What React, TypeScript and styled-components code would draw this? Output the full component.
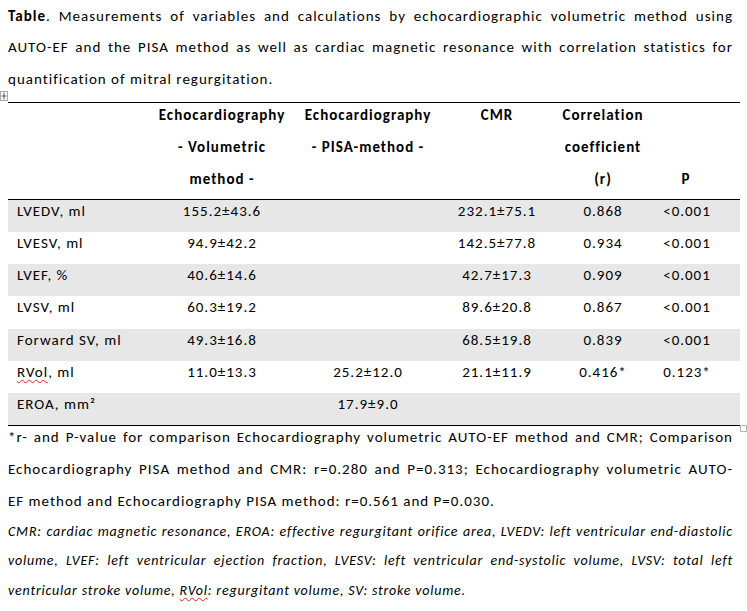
import React from "react";
import styled, { createGlobalStyle } from "styled-components";

const GlobalStyle = createGlobalStyle`
  html, body { margin: 0; padding: 0; background: #ffffff; }
  body {
    font-family: Carlito, Calibri, Lato, "Noto Sans", sans-serif;
    color: #000000;
  }
`;

const COLS = "142px 144px 148px 110px 102px 86px";

const Page = styled.div`
  position: relative;
  width: 747px;
  height: 611px;
  box-sizing: border-box;
  padding: 8px 7px 0 8px;
  overflow: hidden;
  font-size: 15px;
  letter-spacing: 1px;
`;

const TextBlock = styled.div`
  width: 725px;
`;

const Line = styled.div<{ $h: number; $last?: boolean; $italic?: boolean }>`
  height: ${(p) => p.$h}px;
  line-height: 17px;
  text-align: justify;
  text-align-last: ${(p) => (p.$last ? "left" : "justify")};
  white-space: nowrap;
  font-style: ${(p) => (p.$italic ? "italic" : "normal")};
  font-size: ${(p) => (p.$italic ? "14px" : "15px")};
  letter-spacing: ${(p) => (p.$italic ? "0.8px" : "1px")};
`;

const Bold = styled.b`
  font-weight: 700;
`;

const Misspelled = styled.span`
  text-decoration: underline wavy #e02020;
  text-decoration-thickness: 1px;
  text-underline-offset: 2px;
  text-decoration-skip-ink: none;
`;

const Table = styled.div`
  position: relative;
  width: 732px;
  border-top: 1px solid #000;
  border-bottom: 1px solid #000;
`;

const HeadRow = styled.div`
  display: grid;
  grid-template-columns: ${COLS};
  height: 96px;
  border-bottom: 1px solid #000;
  font-weight: 700;
`;

const HeadCell = styled.div<{ $skip?: number; $padRight?: number }>`
  display: flex;
  flex-direction: column;
  align-items: center;
  padding-top: ${(p) => 4 + (p.$skip ?? 0) * 32}px;
  padding-right: ${(p) => p.$padRight ?? 0}px;
`;

const HeadLine = styled.div`
  height: 32px;
  line-height: 17px;
  white-space: nowrap;
`;

const DataRow = styled.div<{ $shaded: boolean }>`
  display: grid;
  grid-template-columns: ${COLS};
  box-sizing: border-box;
  height: calc(225px / 7);
  padding-top: 3px;
  line-height: 17px;
  background: ${(p) => (p.$shaded ? "#e7e7e7" : "transparent")};
`;

const LabelCell = styled.div`
  padding-left: 9px;
  white-space: nowrap;
`;

const ValueCell = styled.div<{ $padRight?: number }>`
  text-align: center;
  white-space: nowrap;
  padding-right: ${(p) => p.$padRight ?? 0}px;
`;

const Footnote = styled(TextBlock)`
  margin-top: 3px;
`;

const MoveHandle = styled.div`
  position: absolute;
  left: 0;
  top: 91px;
  width: 8px;
  height: 10px;
  border: 1px solid #a8a8a8;
  box-sizing: border-box;
  background: #fff;
  display: flex;
  align-items: center;
  justify-content: center;
`;

const ResizeHandle = styled.div`
  position: absolute;
  left: 740px;
  top: 425px;
  width: 7px;
  height: 7px;
  border: 1px solid #b4b4b4;
  box-sizing: border-box;
  background: #fff;
`;

type Row = {
  label: React.ReactNode;
  vol?: string;
  pisa?: string;
  cmr?: string;
  r?: string;
  p?: string;
};

const rows: Row[] = [
  { label: "LVEDV, ml", vol: "155.2±43.6", cmr: "232.1±75.1", r: "0.868", p: "<0.001" },
  { label: "LVESV, ml", vol: "94.9±42.2", cmr: "142.5±77.8", r: "0.934", p: "<0.001" },
  { label: "LVEF, %", vol: "40.6±14.6", cmr: "42.7±17.3", r: "0.909", p: "<0.001" },
  { label: "LVSV, ml", vol: "60.3±19.2", cmr: "89.6±20.8", r: "0.867", p: "<0.001" },
  { label: "Forward SV, ml", vol: "49.3±16.8", cmr: "68.5±19.8", r: "0.839", p: "<0.001" },
  {
    label: (
      <>
        <Misspelled>RVol</Misspelled>, ml
      </>
    ),
    vol: "11.0±13.3",
    pisa: "25.2±12.0",
    cmr: "21.1±11.9",
    r: "0.416*",
    p: "0.123*",
  },
  { label: "EROA, mm²", pisa: "17.9±9.0" },
];

export default function App() {
  return (
    <Page>
      <GlobalStyle />
      <TextBlock>
        <Line $h={31.33}>
          <Bold>Table</Bold>. Measurements of variables and calculations by echocardiographic volumetric method using
        </Line>
        <Line $h={31.33}>
          AUTO-EF and the PISA method as well as cardiac magnetic resonance with correlation statistics for
        </Line>
        <Line $h={31.33} $last>
          quantification of mitral regurgitation.
        </Line>
      </TextBlock>

      <MoveHandle>
        <svg width="6" height="8" viewBox="0 0 6 8">
          <path d="M3 0.5 V7.5 M0.5 4 H5.5" stroke="#555" strokeWidth="1" fill="none" />
        </svg>
      </MoveHandle>

      <Table>
        <HeadRow>
          <HeadCell />
          <HeadCell>
            <HeadLine>Echocardiography</HeadLine>
            <HeadLine>- Volumetric</HeadLine>
            <HeadLine>method -</HeadLine>
          </HeadCell>
          <HeadCell>
            <HeadLine>Echocardiography</HeadLine>
            <HeadLine>- PISA-method -</HeadLine>
          </HeadCell>
          <HeadCell>
            <HeadLine>CMR</HeadLine>
          </HeadCell>
          <HeadCell>
            <HeadLine>Correlation</HeadLine>
            <HeadLine>coefficient</HeadLine>
            <HeadLine>(r)</HeadLine>
          </HeadCell>
          <HeadCell $skip={2} $padRight={22}>
            <HeadLine>P</HeadLine>
          </HeadCell>
        </HeadRow>
        {rows.map((r, i) => (
          <DataRow key={i} $shaded={i % 2 === 0}>
            <LabelCell>{r.label}</LabelCell>
            <ValueCell>{r.vol}</ValueCell>
            <ValueCell>{r.pisa}</ValueCell>
            <ValueCell>{r.cmr}</ValueCell>
            <ValueCell>{r.r}</ValueCell>
            <ValueCell $padRight={20}>{r.p}</ValueCell>
          </DataRow>
        ))}
      </Table>
      <ResizeHandle />

      <Footnote>
        <Line $h={32}>
          *r- and P-value for comparison Echocardiography volumetric AUTO-EF method and CMR; Comparison
        </Line>
        <Line $h={32}>
          Echocardiography PISA method and CMR: r=0.280 and P=0.313; Echocardiography volumetric AUTO-
        </Line>
        <Line $h={30} $last>
          EF method and Echocardiography PISA method: r=0.561 and P=0.030.
        </Line>
        <Line $h={29.5} $italic>
          CMR: cardiac magnetic resonance, EROA: effective regurgitant orifice area, LVEDV: left ventricular end-diastolic
        </Line>
        <Line $h={29.5} $italic>
          volume, LVEF: left ventricular ejection fraction, LVESV: left ventricular end-systolic volume, LVSV: total left
        </Line>
        <Line $h={29.5} $italic $last>
          ventricular stroke volume, <Misspelled>RVol</Misspelled>: regurgitant volume, SV: stroke volume.
        </Line>
      </Footnote>
    </Page>
  );
}
